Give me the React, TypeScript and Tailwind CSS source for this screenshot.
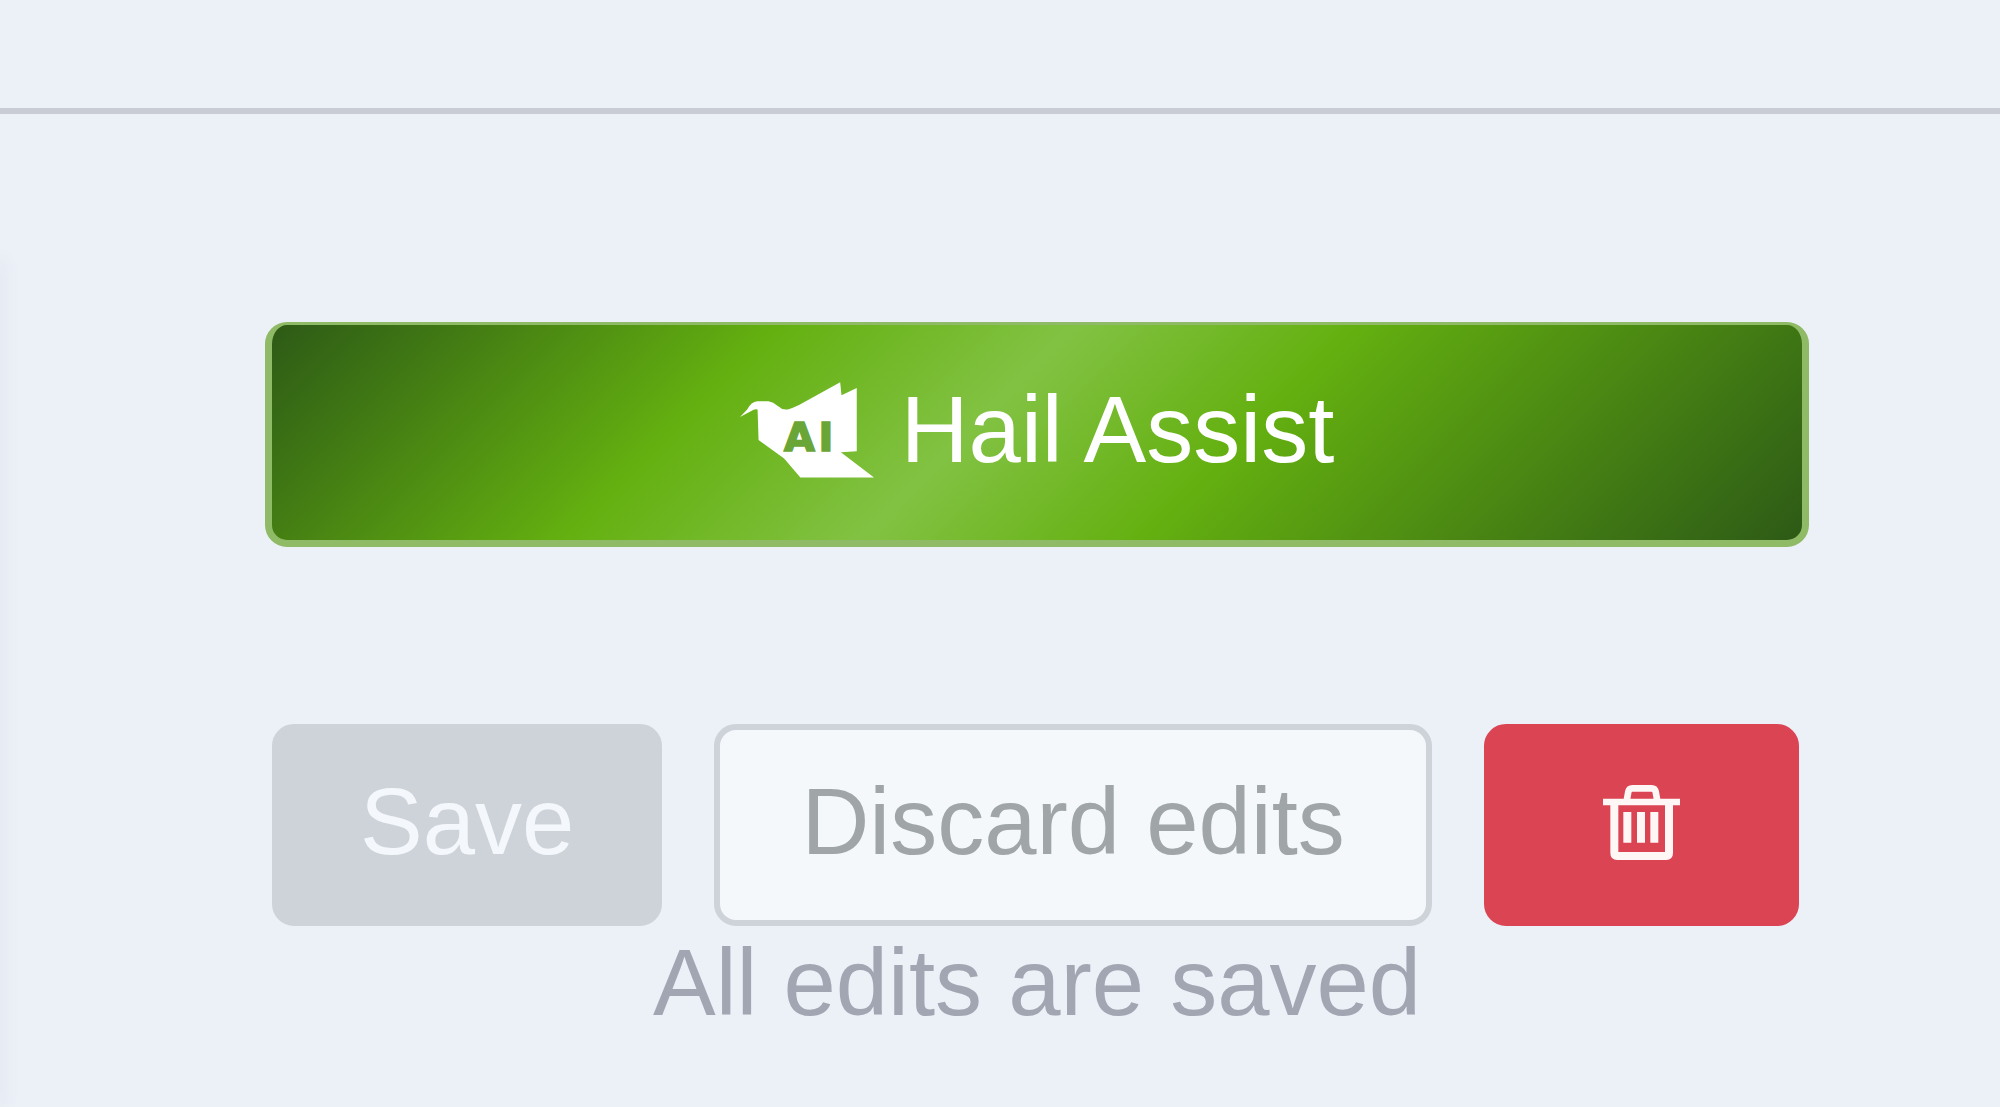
import type { ButtonHTMLAttributes } from "react";

import { twMerge } from "tailwind-merge";

function BirdLogo() {
  return (
    <svg aria-hidden="true" viewBox="54 60 404 288" className="h-[96px] w-[134px] shrink-0">
      <path
        fill="#ffffff"
        d="M54 165 L75 143 Q88 118 106 117 L140 117 Q154 119 168 132 Q182 145 198 142 Q214 138 232 129 L356 60 L360 99 L406 77 L406 268 L358 271 L458 347 L236 347 L187 290 L110 234 L107 142 Q98 139 88 147 Z"
      />
      <text
        x="187 291"
        y="266"
        fill="#6aa637"
        stroke="#6aa637"
        strokeWidth="5"
        fontFamily="'DejaVu Sans', sans-serif"
        fontSize="120"
        fontWeight="700"
      >
        AI
      </text>
    </svg>
  );
}

function TrashIcon() {
  return (
    <svg
      aria-hidden="true"
      viewBox="72 74 231 225"
      fill="none"
      stroke="#fff6f6"
      className="h-[75px] w-[77px]"
    >
      <path strokeWidth="20" d="M72 125 H303" />
      <path strokeWidth="20" strokeLinejoin="round" d="M143 122 L148 94 Q150 84 160 84 H218 Q228 84 230 94 L235 122" />
      <path strokeWidth="24" strokeLinejoin="round" d="M106 130 V278 Q106 287 115 287 H262 Q270 287 270 278 V130" />
      <path strokeWidth="24" d="M145 155 V247 M186 155 V247 M226 155 V247" />
    </svg>
  );
}

function ActionButton({ className, ...props }: ButtonHTMLAttributes<HTMLButtonElement>) {
  return (
    <button
      type="button"
      className={twMerge(
        "flex items-center justify-center rounded-[22px] border-[6px] pt-[42px] pb-[48px] text-[94px] leading-[100px] whitespace-nowrap",
        className,
      )}
      {...props}
    />
  );
}

export default function App() {
  return (
    <div className="flex min-h-screen flex-col bg-[#ecf0f7] font-['Liberation_Sans',Arial,sans-serif]">
      <header className="h-[114px] border-b-[6px] border-[#c9ccd5]" />

      <div className="flex flex-1 overflow-hidden">
        {/* Edge of the editor panel */}
        <aside className="mt-[146px] w-0 shadow-[0_0_16px_1px_rgba(90,95,115,0.28)]" />

        <main className="flex-1 pt-[208px] pr-[191px] pl-[265px]">
          <button
            type="button"
            className="flex w-full items-center justify-center gap-[27px] rounded-[22px] border-x-[7px] border-t-[3px] border-b-[7px] border-[#8fba66] bg-[linear-gradient(135deg,#2d5a16_0%,#64b010_29%,#82c243_46%,#64b010_62%,#2d5a16_100%)] pt-[55px] pb-[60px] text-[94px] leading-[100px] whitespace-nowrap text-white"
          >
            <BirdLogo />
            Hail Assist
          </button>

          <div className="mt-[177px] flex gap-[52px] pr-[10px] pl-[7px]">
            <ActionButton
              disabled
              className="border-[#ced3da] bg-[#ced3da] px-[82px] text-[#f4f8fc]"
            >
              Save
            </ActionButton>
            <ActionButton
              disabled
              className="flex-1 border-[#ced2d9] bg-[#f4f8fb] text-[#a0a5a8]"
            >
              Discard edits
            </ActionButton>
            <ActionButton
              aria-label="Delete"
              className="border-[#da4453] bg-[#da4453] px-[113px]"
            >
              <TrashIcon />
            </ActionButton>
          </div>

          <p role="status" className="text-center text-[94px] leading-[114px] text-[#a1a6b2]">
            All edits are saved
          </p>
        </main>
      </div>
    </div>
  );
}
